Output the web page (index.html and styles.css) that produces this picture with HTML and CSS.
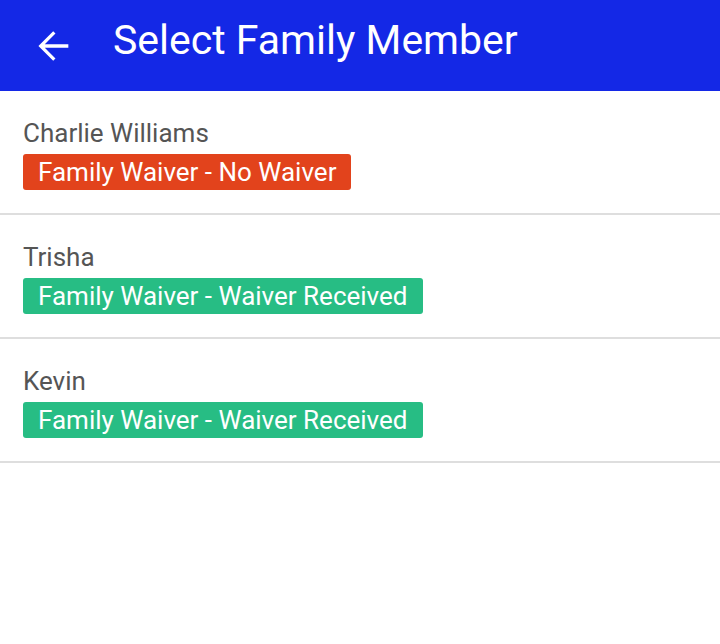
FILE: index.html
```html
<!DOCTYPE html>
<html>
<head>
<meta charset="utf-8">
<link rel="stylesheet" href="styles.css">
</head>
<body>
<header class="appbar">
  <svg class="back" viewBox="0 0 24 24" width="46" height="46"><path d="M20 11.1H7.7l5.6-5.6L12.1 4.3 4.4 12l7.7 7.7 1.2-1.2-5.6-5.6H20v-1.8z" fill="#fff"/></svg>
  <h1 class="title">Select Family Member</h1>
</header>
<ul class="list">
  <li class="item">
    <div class="name">Charlie Williams</div>
    <span class="badge badge-red">Family Waiver - No Waiver</span>
  </li>
  <li class="item">
    <div class="name">Trisha</div>
    <span class="badge badge-green">Family Waiver - Waiver Received</span>
  </li>
  <li class="item">
    <div class="name">Kevin</div>
    <span class="badge badge-green">Family Waiver - Waiver Received</span>
  </li>
</ul>
</body>
</html>
```
FILE: styles.css
```css
html, body {
  margin: 0;
  padding: 0;
  background: #ffffff;
  font-family: Roboto, "Noto Sans", sans-serif;
}
.appbar {
  height: 91px;
  background: #1428e6;
  display: flex;
  align-items: center;
  padding-left: 30px;
  box-sizing: border-box;
}
.back {
  display: block;
}
.title {
  margin: 0 0 12px 37px;
  color: #ffffff;
  font-weight: 400;
  font-size: 41px;
  line-height: 48px;
}
.list {
  list-style: none;
  margin: 0;
  padding: 0;
}
.item {
  padding: 27px 0 23px 23px;
  border-bottom: 2px solid #dedede;
}
.name {
  color: #555555;
  font-size: 26px;
  line-height: 30px;
  margin-bottom: 6px;
}
.badge {
  display: inline-block;
  color: #ffffff;
  font-size: 26px;
  line-height: 36px;
  padding: 0 15px 0 15px;
  border-radius: 3px;
}
.badge-red {
  background: #e2431c;
}
.badge-green {
  background: #27bd84;
}
```
